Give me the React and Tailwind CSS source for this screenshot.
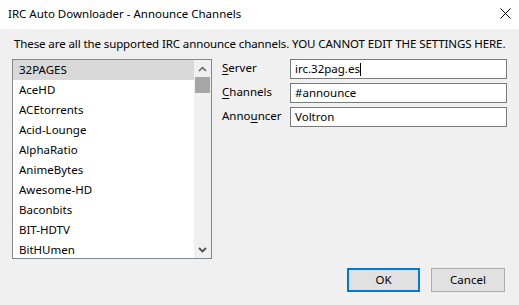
import React from "react";

const channels = [
  "32PAGES",
  "AceHD",
  "ACEtorrents",
  "Acid-Lounge",
  "AlphaRatio",
  "AnimeBytes",
  "Awesome-HD",
  "Baconbits",
  "BIT-HDTV",
  "BitHUmen",
];

function Field({ value, caret }) {
  return (
    <div className="w-[217px] h-[20px] border border-[#7a7a7a] bg-white flex items-center pl-[4px] text-[11.5px] leading-[16px] text-black">
      <span>{value}</span>
      {caret && <span className="w-[1px] h-[13px] bg-black" />}
    </div>
  );
}

export default function App() {
  return (
    <div
      className="w-[519px] h-[305px] bg-[#f0f0f0] flex flex-col text-black overflow-hidden"
      style={{ fontFamily: '"Noto Sans", "Open Sans", sans-serif' }}
    >
      {/* Title bar */}
      <div className="h-[29px] bg-white flex items-center justify-between pl-[8px] pr-[8px] shrink-0">
        <span className="text-[11.5px] leading-[16px] -mt-[2px]">IRC Auto Downloader - Announce Channels</span>
        <svg width="11" height="11" viewBox="0 0 11 11" className="-mt-[2px]">
          <path d="M0.5 0.5 L10.5 10.5 M10.5 0.5 L0.5 10.5" stroke="#000" strokeWidth="1" fill="none" />
        </svg>
      </div>

      {/* Description */}
      <div className="pl-[14px] pt-[7px] text-[11.5px] leading-[16px] tracking-[-0.1px] whitespace-nowrap">
        These are all the supported IRC announce channels. YOU CANNOT EDIT THE SETTINGS HERE.
      </div>

      {/* Main row */}
      <div className="flex pl-[12px] mt-[7px]">
        {/* Listbox */}
        <div className="w-[200px] h-[200px] border border-[#828790] bg-white flex shrink-0">
          <div className="flex-1 overflow-hidden">
            {channels.map((c, i) => (
              <div
                key={c}
                className={`h-[20px] flex items-center pl-[6px] text-[11.5px] leading-[16px] ${i === 0 ? "bg-[#d9d9d9]" : ""}`}
              >
                {c}
              </div>
            ))}
          </div>
          <div className="w-[17px] bg-[#f0f0f0] flex flex-col">
            <div className="h-[17px] flex items-center justify-center">
              <svg width="9" height="6" viewBox="0 0 9 6">
                <path d="M1 5 L4.5 1.5 L8 5" stroke="#606060" strokeWidth="1.5" fill="none" />
              </svg>
            </div>
            <div className="h-[16px] mx-[1px] bg-[#a6a6a6]" />
            <div className="flex-1" />
            <div className="h-[17px] flex items-center justify-center">
              <svg width="9" height="6" viewBox="0 0 9 6">
                <path d="M1 1 L4.5 4.5 L8 1" stroke="#505050" strokeWidth="1.8" fill="none" />
              </svg>
            </div>
          </div>
        </div>

        {/* Form */}
        <div className="ml-[10px] flex flex-col gap-[4px]">
          <div className="flex items-start">
            <div className="w-[68px] text-[11.5px] leading-[16px] pt-[1px]">
              <span className="underline underline-offset-2">S</span>erver
            </div>
            <Field value="irc.32pag.es" caret />
          </div>
          <div className="flex items-start">
            <div className="w-[68px] text-[11.5px] leading-[16px] pt-[1px]">
              <span className="underline underline-offset-2">C</span>hannels
            </div>
            <Field value="#announce" />
          </div>
          <div className="flex items-start">
            <div className="w-[68px] text-[11.5px] leading-[16px] pt-[1px]">
              Anno<span className="underline underline-offset-2">u</span>ncer
            </div>
            <Field value="Voltron" />
          </div>
        </div>
      </div>

      {/* Buttons */}
      <div className="flex justify-end gap-[11px] pr-[14px] mt-[9px]">
        <button className="w-[73px] h-[24px] border-2 border-[#0078d7] bg-[#e1e1e1] text-[11.5px] leading-[16px] flex items-center justify-center">
          OK
        </button>
        <button className="w-[74px] h-[24px] border border-[#adadad] bg-[#e1e1e1] text-[11.5px] leading-[16px] flex items-center justify-center">
          Cancel
        </button>
      </div>
    </div>
  );
}
